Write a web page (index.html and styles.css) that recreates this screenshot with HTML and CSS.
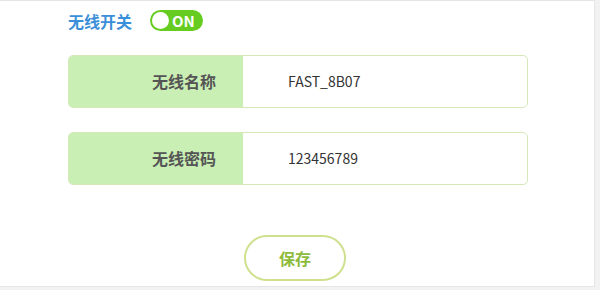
FILE: index.html
```html
<!DOCTYPE html>
<html lang="zh-CN">
<head>
    <meta charset="UTF-8">
    <meta name="viewport" content="width=device-width, initial-scale=1.0">
    <title>无线设置</title>
    <link rel="stylesheet" href="styles.css">
</head>
<body>
<div class="panel">
    <div class="switch-row">
        <span class="switch-label">无线开关</span>
        <span class="toggle"><span class="knob"></span>ON</span>
    </div>

    <div class="field">
        <div class="field-name">无线名称</div>
        <div class="field-value">FAST_8B07</div>
    </div>

    <div class="field">
        <div class="field-name">无线密码</div>
        <div class="field-value">123456789</div>
    </div>

    <div class="actions">
        <button class="save">保存</button>
    </div>
</div>
</body>
</html>
```

FILE: styles.css
```css
body {
    margin: 0;
    background: #f2f2f2;
    font-family: "Noto Sans CJK SC", "Open Sans", sans-serif;
}

.panel {
    width: 595px;
    height: 287px;
    background: #fff;
    border-top: 1px solid #e6e6e6;
    border-right: 1px solid #e6e6e6;
    border-bottom: 1px solid #e6e6e6;
    padding: 9px 0 0 68px;
    box-sizing: border-box;
}

.switch-row {
    display: flex;
    align-items: center;
    height: 21px;
    margin-bottom: 24px;
}

.switch-label {
    color: #3b8fd8;
    font-size: 16px;
    font-weight: bold;
    margin-right: 18px;
}

.toggle {
    display: flex;
    align-items: center;
    width: 53px;
    height: 21px;
    border-radius: 11px;
    background: #66cc1f;
    color: #fff;
    font-size: 15px;
    font-weight: bold;
    box-sizing: border-box;
    padding-left: 2px;
}

.knob {
    width: 17px;
    height: 17px;
    border-radius: 50%;
    background: #fff;
    margin-right: 3px;
}

.field {
    display: flex;
    width: 460px;
    height: 53px;
    border: 1px solid #d5e8b8;
    border-radius: 5px;
    overflow: hidden;
    box-sizing: border-box;
    margin-bottom: 24px;
}

.field-name {
    width: 174px;
    background: #c9efb4;
    color: #555;
    font-size: 16px;
    font-weight: bold;
    text-align: right;
    padding-right: 27px;
    box-sizing: border-box;
    line-height: 51px;
}

.field-value {
    padding-left: 45px;
    color: #333;
    font-size: 14px;
    line-height: 51px;
}

.actions {
    padding-left: 176px;
    padding-top: 26px;
}

.save {
    width: 102px;
    height: 46px;
    border: 2px solid #cfe08f;
    border-radius: 23px;
    background: #fff;
    color: #8dbb3c;
    font-family: inherit;
    font-size: 16px;
    font-weight: bold;
    cursor: pointer;
}
```
